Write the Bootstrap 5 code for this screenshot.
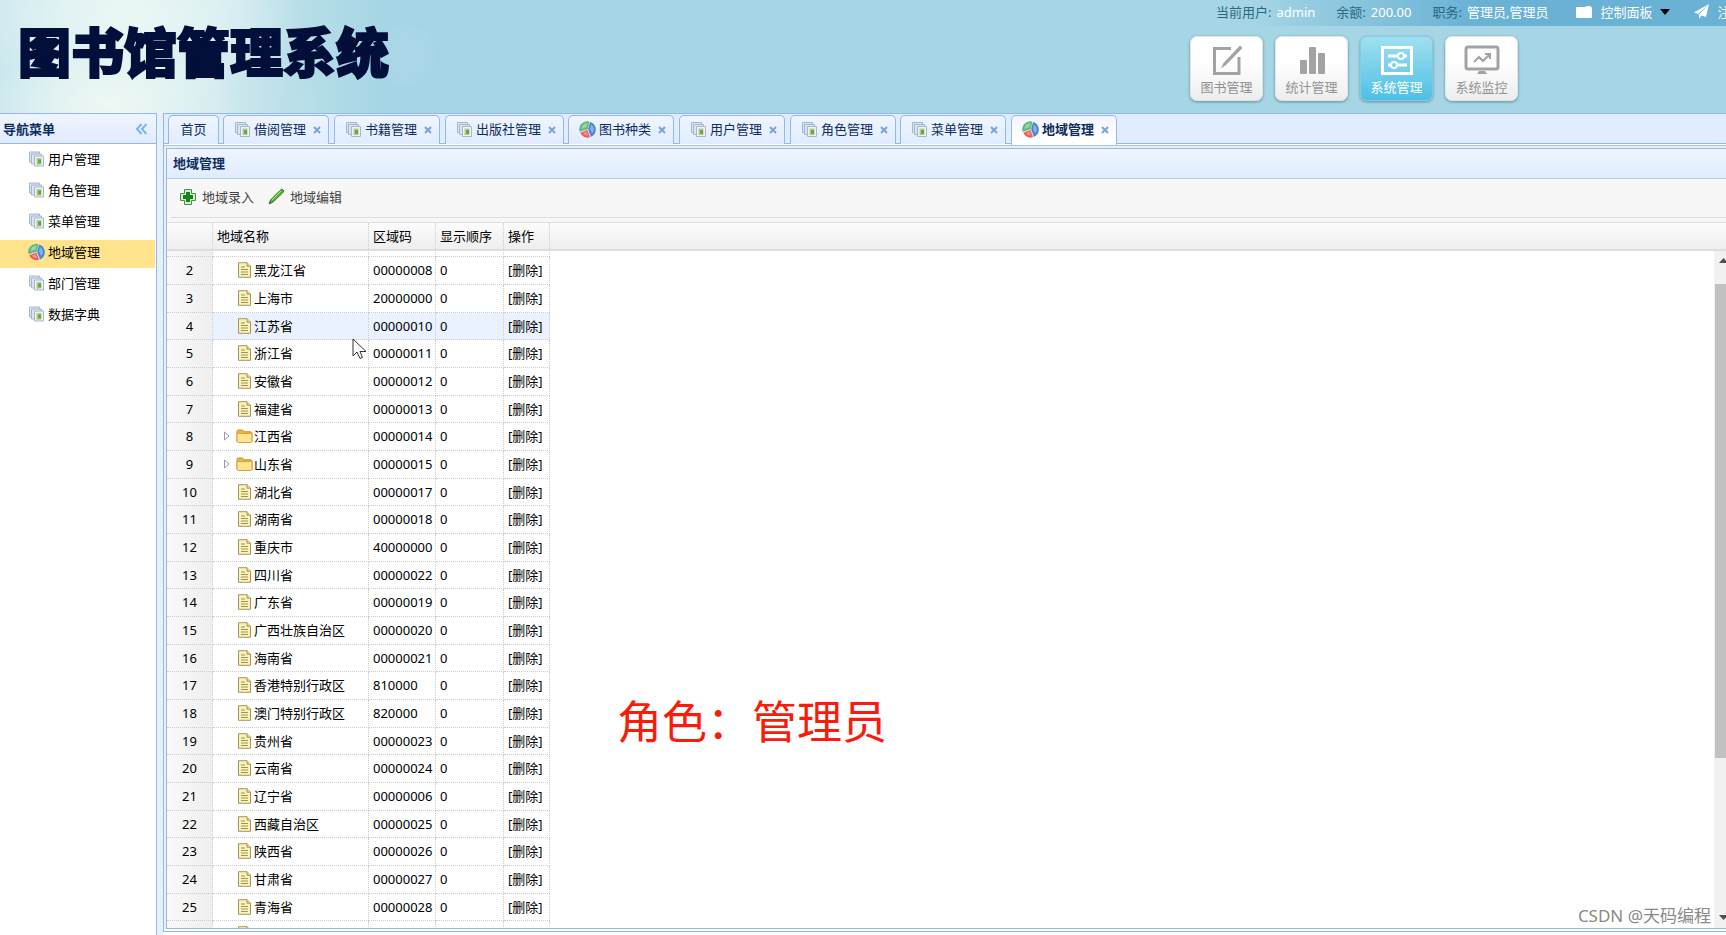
<!DOCTYPE html>
<html lang="zh-CN">
<head>
<meta charset="utf-8">
<meta name="viewport" content="width=device-width, initial-scale=1">
<title>图书馆管理系统</title>
<link href="https://cdn.jsdelivr.net/npm/bootstrap@5.3.0/dist/css/bootstrap.min.css" rel="stylesheet">
<style>
:root { --line: #95b8e7; --soft: #e0ecff; --navy: #0e2d5f; }
body { font: 13px/20px "Noto Sans", "Noto Sans CJK SC", sans-serif; color: #000; background: #fff; }
button { font: inherit; }
a { color: inherit; text-decoration: none; }

/* banner */
.banner { height: 113px; background:
  radial-gradient(circle at 298px 104px, #b9dfe9 0 4px, transparent 24px),
  radial-gradient(circle at 405px 55px, #a9d7e7 0 24px, transparent 32px),
  radial-gradient(ellipse 130px 60px at 110px 104px, #eef8f4 0, transparent 100%),
  radial-gradient(ellipse 170px 90px at 130px 16px, #ebf7f5 0, transparent 100%),
  linear-gradient(90deg, #c9e7ee 0, #d9eff1 120px, #d0e9ef 220px, #b8dee8 300px, #a6d6e5 380px); }
.brand-title { font-size: 53px; line-height: 72px; font-weight: 900; color: #020f3a; -webkit-text-stroke: 2px #020f3a; stroke-linejoin: round; padding: 17px 0 0 18px; }
.banner-side { width: 540px; }
.user-bar { height: 26px; padding: 0 0 2px 30px; color: #2c6780; background: linear-gradient(90deg, transparent 60px, #69b2d5 290px); border-bottom: 1px solid transparent; }
.user-bar .val { color: #fff; margin: 0 21px 0 5px; }
.user-bar .val:last-of-type { margin-right: 24px; }
.user-bar button { color: #fff; background: none; border: 0; padding: 0; }
.tile { width: 73px; height: 65px; border: 1px solid #dfe6e8; border-radius: 7px; background: linear-gradient(#fff 40%, #ededed); color: #929292; box-shadow: 0 1px 3px #5e8c9c; padding: 5px 0 0; line-height: 20px; }
.tile svg { display: block; margin: 0 auto 1px; }
.tile.on { color: #fff; background: linear-gradient(#a0e0ef, #4fbfe6); border-color: #7fcdea; }
.tiles { gap: 12px; padding: 10px 0 0 4px; }

/* sidebar */
.side { width: 157px; border: 1px solid var(--line); border-width: 1px 1px 0 0; }
.pane-title { height: 30px; line-height: 28px; color: var(--navy); font-weight: 700; background: linear-gradient(#eff5ff, #e0ecff); border-bottom: 1px solid var(--line); }
.side .pane-title { padding: 0 9px 0 3px; }
.side-list { padding-top: 3px; margin: 0; }
.side-list a { height: 28px; margin: 0 1px 3px 0; padding: 0 0 4px 28px; gap: 3px; }
.side-list a.on { background: #ffe48d; }
.splitter { width: 6px; background: #e6f0fa; }

/* tabs */
.main-pane { border: 1px solid var(--line); border-right: 0; margin-bottom: 3px; padding-bottom: 2px; }
.tab-strip { height: 30px; padding: 1px 0 0 4px; background: var(--soft); border-bottom: 1px solid var(--line); }
.tab-item { height: 29px; width: 106px; margin-right: 5px; padding: 0 7px 2px 10px; border: 1px solid var(--line); border-bottom: 0; border-radius: 5px 5px 0 0; background: linear-gradient(#eff5ff, #e0ecff); color: var(--navy); }
.tab-item:nth-child(3n+1) { margin-right: 4px; }
.tab-item:first-child { width: 51px; padding: 0 0 2px; }
.tab-item.wide { width: 119px; }
.tab-item.on { background: linear-gradient(#eff5ff, #fff 70%); font-weight: 700; height: 31px; padding-bottom: 4px; }
.tab-item button { background: none; border: 0; padding: 0; color: inherit; }
.tab-item .shut { color: #7da3d3; width: 8px; line-height: 8px; }
.tab-item .label { margin: 0 auto 0 3px; }
.tab-body { margin-top: 1px; padding: 2px 0 0 2px; background: #e6f0f8; border-top: 1px solid #a9c6e6; }
.inner-pane { border: 1px solid var(--line); border-right: 0; background: #fff; }
.inner-pane .pane-title { padding-left: 6px; border-color: #b3d0ee; }
.toolbar-row { height: 43px; background: #f7f7f7; padding: 0 0 4px 4px; }
.toolbar-row > div { height: 39px; border-bottom: 1px solid #dcdcdc; padding: 0 0 3px 8px; gap: 14px; }
.toolbar-row button { border: 0; background: none; padding: 0; color: #444; gap: 5px; }

/* grid */
.grid-table { width: 383px; table-layout: fixed; border-collapse: separate; border-spacing: 0; }
.grid-table th, .grid-table td { padding: 0 0 0 4px; border: 0 dotted #ccc; border-width: 0 1px 1px 0; white-space: nowrap; font-weight: 400; line-height: 20px; overflow: hidden; }
.grid-table .no { text-align: center; padding-left: 0; background: linear-gradient(90deg, #f9f9f9, #efefef); }
.grid-head { height: 29px; background: linear-gradient(#fcfcfc, #eee); border: 1px solid #ddd; border-width: 1px 0 2px; }
.grid-head th { height: 26px; border-bottom: 0; }
.grid-head .no { background: none; }
.rows-view { margin-top: -22px; }
.rows-view td { height: 28px; padding-bottom: 1px; }
.rows-view tr:nth-child(3n+1):not(:first-child) td { height: 27px; }
.rows-view tr.hover td:not(.no) { background: #eaf2ff; }
.tree { padding-left: 6px; gap: 1px; }
.tree .twig { width: 12px; height: 10px; }
.rail { width: 12px; background: #f1f1f1; padding-left: 1px; }
.rail .stub { height: 33px; padding: 0; border: 0; background: none; }
.rail .thumb { flex: 475 0 0; background: #c1c1c1; }
.rail .rest { flex: 137 0 0; }
.role-note { left: 450px; top: 439px; font-size: 45px; line-height: 64px; color: #fa1b0c; }
.credit { right: 15px; bottom: 0; font-size: 17px; line-height: 24px; color: #8a8a8a; }
.pointer { left: 185px; top: 87px; }
</style>
<script src="https://cdn.jsdelivr.net/npm/bootstrap@5.3.0/dist/js/bootstrap.bundle.min.js"></script>
</head>
<body class="vh-100 d-flex flex-column overflow-hidden">
<svg width="0" height="0" class="position-absolute" aria-hidden="true">
  <symbol id="pics" viewBox="0 0 17 17">
    <g fill="#dbe5f0" stroke="#a3b8ce"><path d="M1.5 1.5h10v10h-10z"/><path d="M3.5 3.5h10v10h-10z"/><path fill="#eef3f9" d="M6.5 5.500h9v10h-9z"/></g>
    <path fill="#b3cf90" d="M8.500 7.500h5V14h-5z"/><path fill="#6ba04c" d="M10 9h3v4h-3z"/><path fill="#c3b45b" d="M9 12h2v2H9z"/>
  </symbol>
  <symbol id="pie" viewBox="0 0 17 17">
    <circle cx="8.500" cy="8.500" r="7.500" fill="#e4e9ef"/>
    <path fill="#64b883" d="M9 8L.6 10.800A8 8 0 0 1 10.300.6z"/><path fill="#9bd4a5" d="M7.500 6L2.500 8A6 6 0 0 1 8.500 2z"/>
    <path fill="#4b86d0" d="M9.200 8.500L11 .9a8 8 0 0 1 1 15z"/><path fill="#86b0e6" d="M11 8l1-4.500a5.500 5.500 0 0 1 1 9z"/>
    <path fill="#ee5f58" d="M8.400 9l2.700 7.300A8 8 0 0 1 1.200 11.800z"/><path fill="#f7938c" d="M7.500 10.500l1.500 4A6 6 0 0 1 4 12z"/>
  </symbol>
  <symbol id="doc" viewBox="0 0 14 16">
    <path fill="#fdf3b0" stroke="#a29468" d="M1 .7h8.500L13 4.200v11.100H1z"/><path fill="#e7dca0" stroke="#a29468" d="M9.500.7v3.500H13"/>
    <path stroke="#9c9468" d="M3.500 5h4M3.500 7.500h7M3.500 10h7M3.500 12.500h7"/>
  </symbol>
  <symbol id="folder" viewBox="0 0 17 16">
    <path fill="#e9b547" stroke="#c98f2b" d="M1 3.500Q1 2 2.500 2h4L8 3.800h6.500Q16 4 16 5v8.500H1z"/><path fill="#fde48e" stroke="#d9a23c" d="M1 6.500Q1 5.500 2 5.500h13q1 0 1 1V13q0 1.500-1.500 1.500h-12Q1 14.500 1 13z"/>
  </symbol>
</svg>

<header class="banner d-flex justify-content-between flex-shrink-0">
  <h1 class="brand-title m-0 text-nowrap">图书馆管理系统</h1>
  <div class="banner-side overflow-hidden flex-shrink-0">
    <div class="user-bar d-flex align-items-center text-nowrap">
      <span>当前用户:</span><span class="val">admin</span>
      <span>余额:</span><span class="val">200.00</span>
      <span>职务:</span><span class="val">管理员,管理员</span>
      <button class="d-flex align-items-center ms-1" type="button">
        <svg width="16" height="12" class="me-2" viewBox="0 0 16 12"><path fill="#fff" d="M0 2q0-1 1-1h8l2-1h3l1 1h0q1 0 1 1v9q0 1-1 1H1q-1 0-1-1z"/></svg>控制面板<svg width="10" height="6" class="ms-2" viewBox="0 0 10 6"><path d="M0 0h10L5 6z"/></svg>
      </button>
      <button class="d-flex align-items-center ms-4" type="button">
        <svg width="15" height="15" class="me-2" viewBox="0 0 15 15"><path fill="#fff" d="M15 0L0 8.500 4 10zM15 0L5 10.500V15l2.500-3.500L12 13z"/></svg>注
      </button>
    </div>
    <div class="tiles d-flex">
      <button class="tile" type="button"><svg width="32" height="31" viewBox="0 0 32 31" fill="none" stroke="#a3a3a3" stroke-width="3"><path d="M20 3.500H3.500v25H28V12"/><path stroke="none" fill="#a3a3a3" d="M29 .5l2.500 2.500L15 20l-5 3.500 2.500-5.500z"/></svg>图书管理</button>
      <button class="tile" type="button"><svg width="32" height="31" viewBox="0 0 32 31" fill="#a3a3a3"><rect x="4" y="15" width="7" height="14" rx="1"/><rect x="13" y="2" width="7" height="27" rx="1"/><rect x="22" y="8" width="7" height="21" rx="1"/></svg>统计管理</button>
      <button class="tile on" type="button"><svg width="36" height="31" viewBox="0 0 36 31" fill="none" stroke="#fff" stroke-width="3"><path d="M3.500 2.500h29v26h-29z"/><g stroke-width="3"><path d="M9 11h9M25 11h3M9 20h3M19 20h9"/><circle cx="22" cy="11" r="3" stroke-width="2"/><circle cx="15" cy="20" r="3" stroke-width="2"/></g></svg>系统管理</button>
      <button class="tile" type="button"><svg width="36" height="31" viewBox="0 0 36 31" fill="none" stroke="#a3a3a3" stroke-width="3"><rect x="2" y="2" width="32" height="22" rx="2"/><path stroke-width="2" d="M10 17l5-5 4 4 6-6M21 9h5v5"/><path fill="#a3a3a3" stroke="none" d="M15 26h6l2 3H13z"/></svg>系统监控</button>
    </div>
  </div>
</header>

<div class="d-flex flex-grow-1" style="min-height:0">
  <aside class="side flex-shrink-0">
    <div class="pane-title d-flex justify-content-between align-items-center">导航菜单
      <svg width="11" height="12" viewBox="0 0 11 12" fill="none" stroke="#7fb4ee" stroke-width="2"><path d="M5.500 1L1 6l4.500 5M10.500 1L6 6l4.500 5"/></svg></div>
    <nav class="side-list" id="side"></nav>
  </aside>
  <div class="splitter flex-shrink-0"></div>
  <main class="main-pane d-flex flex-column flex-grow-1 overflow-hidden">
    <div class="tab-strip d-flex flex-shrink-0" id="tabs"></div>
    <div class="tab-body d-flex flex-column flex-grow-1 overflow-hidden">
      <section class="inner-pane d-flex flex-column flex-grow-1 overflow-hidden">
        <div class="pane-title flex-shrink-0">地域管理</div>
        <div class="toolbar-row flex-shrink-0"><div class="d-flex align-items-center">
          <button class="d-flex align-items-center" type="button"><svg width="18" height="18" viewBox="0 0 18 18"><path fill="#d5ecd0" stroke="#4e8a50" d="M5.500 1.500h7v4h4v7h-4v4h-7v-4h-4v-7h4z"/><path fill="#12861a" d="M7 4h4v3h3v4h-3v3H7v-3H4V7h3z"/></svg>地域录入</button>
          <button class="d-flex align-items-center" type="button"><svg width="17" height="17" viewBox="0 0 17 17"><path fill="#5cb32f" stroke="#2c8122" d="M12 2.500L14 1l2 2-1.500 2L5 14l-4 2 1.500-4z"/><path stroke="#b5e58d" d="M4 12l9-9"/><path fill="#6b6b54" d="M1 16l1-3 2 2z"/></svg>地域编辑</button>
        </div></div>
        <div class="grid-head flex-shrink-0">
          <table class="grid-table">
            <colgroup><col style="width:46px"><col style="width:156px"><col style="width:67px"><col style="width:68px"><col style="width:46px"></colgroup>
            <thead><tr><th class="no"></th><th>地域名称</th><th>区域码</th><th>显示顺序</th><th>操作</th></tr></thead>
          </table>
        </div>
        <div class="d-flex flex-grow-1 overflow-hidden position-relative">
          <div class="flex-grow-1 overflow-hidden">
            <table class="grid-table rows-view">
              <colgroup><col style="width:46px"><col style="width:156px"><col style="width:67px"><col style="width:68px"><col style="width:46px"></colgroup>
              <tbody id="rows"></tbody>
            </table>
          </div>
          <div class="rail d-flex flex-column flex-shrink-0">
            <button class="stub d-flex" type="button" aria-label="向上"><svg width="11" height="20" viewBox="0 0 11 20"><path fill="#505050" d="M4 12l4.500-5L13 12z"/></svg></button>
            <div class="thumb"></div><div class="rest"></div>
            <button class="stub d-flex" type="button" aria-label="向下"><svg width="11" height="33" viewBox="0 0 11 33"><path fill="#505050" d="M4 20h9l-4.500 5z"/></svg></button>
          </div>
          <div class="role-note position-absolute text-nowrap">角色：管理员</div>
          <div class="credit position-absolute">CSDN @天码编程</div>
          <svg class="pointer position-absolute" width="15" height="22" viewBox="0 0 15 22"><path fill="#fff" stroke="#333" d="M1 1v17l4-4 3 6.500 2.500-1L8 13.500h6z"/></svg>
        </div>
      </section>
    </div>
  </main>
</div>

<script>
const icon = (id, w, h) => `<svg class="flex-shrink-0" width="${w}" height="${h}"><use href="#${id}"/></svg>`;

document.getElementById('side').innerHTML =
  ['用户管理', '角色管理', '菜单管理', '地域管理', '部门管理', '数据字典'].map(t => {
    const on = t === '地域管理';
    return `<a href="#" class="d-flex align-items-center ${on ? 'on' : ''}">${icon(on ? 'pie' : 'pics', 17, 20)}<span>${t}</span></a>`;
  }).join('');

document.getElementById('tabs').innerHTML =
  ['首页', '借阅管理', '书籍管理', '出版社管理', '图书种类', '用户管理', '角色管理', '菜单管理', '地域管理'].map((t, i) => {
    if (!i) return `<div class="tab-item d-flex align-items-center justify-content-center"><button type="button">${t}</button></div>`;
    const cls = (i === 8 ? 'on ' : '') + (i === 3 ? 'wide' : '');
    return `<div class="tab-item d-flex align-items-center ${cls}">${icon(i === 4 || i === 8 ? 'pie' : 'pics', 17, 17)}<button class="label" type="button">${t}</button><button class="shut" type="button" aria-label="关闭"><svg width="8" height="8" viewBox="0 0 8 8" stroke="#7da3d3" stroke-width="2"><path d="M1 1l6 6M7 1L1 7"/></svg></button></div>`;
  }).join('');

const regions = [
  ['', ''], ['黑龙江省', '00000008'], ['上海市', '20000000'], ['江苏省', '00000010'], ['浙江省', '00000011'],
  ['安徽省', '00000012'], ['福建省', '00000013'], ['江西省', '00000014', 1], ['山东省', '00000015', 1],
  ['湖北省', '00000017'], ['湖南省', '00000018'], ['重庆市', '40000000'], ['四川省', '00000022'],
  ['广东省', '00000019'], ['广西壮族自治区', '00000020'], ['海南省', '00000021'], ['香港特别行政区', '810000'],
  ['澳门特别行政区', '820000'], ['贵州省', '00000023'], ['云南省', '00000024'], ['辽宁省', '00000006'],
  ['西藏自治区', '00000025'], ['陕西省', '00000026'], ['甘肃省', '00000027'], ['青海省', '00000028'], ['', '']
];
document.getElementById('rows').innerHTML = regions.map(([name, code, kids], i) => `
  <tr class="${i === 3 ? 'hover' : ''}"><td class="no">${name ? i + 1 : ''}</td>
  <td><div class="tree d-flex align-items-center"><svg class="twig" viewBox="0 0 12 10">${kids ? '<path fill="#fff" stroke="#999" d="M1.500 1l4.500 4-4.500 4z"/>' : ''}</svg>${kids ? icon('folder', 17, 16) : icon('doc', 17, 16)}<span>${name}</span></div></td>
  <td>${code}</td><td>${name ? 0 : ''}</td><td>${name ? '<a href="#">[删除]</a>' : ''}</td></tr>`).join('');
</script>
</body>
</html>
